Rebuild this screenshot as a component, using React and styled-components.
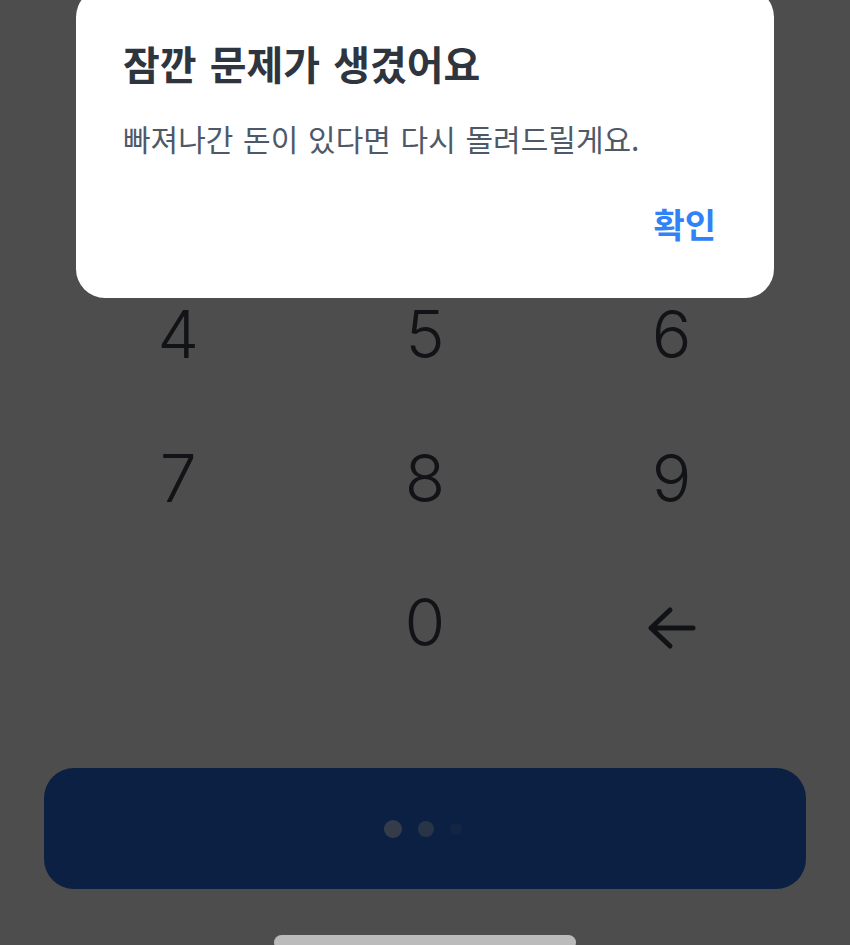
import React from "react";
import styled, { createGlobalStyle } from "styled-components";

const GlobalStyle = createGlobalStyle`
  html, body {
    margin: 0;
    padding: 0;
    background: #4d4d4e;
  }
  * { box-sizing: border-box; }
`;

const Screen = styled.div`
  position: relative;
  width: 850px;
  height: 945px;
  overflow: hidden;
  background: #ffffff;
  display: flex;
  flex-direction: column;
  align-items: center;
  & > * { flex-shrink: 0; }
`;

const Keypad = styled.div`
  width: 100%;
  padding: 118px 55px 0;
  display: grid;
  grid-template-columns: repeat(3, 1fr);
  grid-auto-rows: 144px;
`;

const Key = styled.button`
  border: 0;
  background: transparent;
  padding: 0;
  margin: 0;
  display: flex;
  align-items: center;
  justify-content: center;
  font-family: Inter, "Noto Sans", sans-serif;
  font-weight: 300;
  font-size: 66px;
  line-height: 144px;
  color: #3c4149;
  cursor: pointer;
`;

const BackIcon = styled.svg`
  width: 50px;
  height: 44px;
  margin-top: 12px;
  stroke: #3a3e45;
  stroke-width: 5;
  fill: none;
  stroke-linecap: round;
  stroke-linejoin: round;
`;

const SubmitButton = styled.button`
  margin-top: 74px;
  width: 762px;
  height: 121px;
  border: 0;
  border-radius: 30px;
  background: #2a6bdc;
  display: flex;
  align-items: center;
  justify-content: center;
  gap: 16px;
  padding: 0 5px 0 0;
`;

const Dot = styled.span`
  width: ${(p) => p.$size}px;
  height: ${(p) => p.$size}px;
  border-radius: 50%;
  background: rgba(255, 255, 255, ${(p) => p.$alpha});
`;

const HomeBar = styled.div`
  position: relative;
  z-index: 3;
  margin-top: 46px;
  width: 302px;
  height: 15px;
  border-radius: 8px;
  background: #bcbbbc;
`;

const Scrim = styled.div`
  position: absolute;
  inset: 0;
  z-index: 1;
  background: rgba(0, 0, 0, 0.698);
`;

const Dialog = styled.div`
  position: absolute;
  z-index: 2;
  top: -12px;
  left: 76px;
  width: 698px;
  background: #ffffff;
  border-radius: 29px;
  padding: 49px 48px 53px 47px;
  display: flex;
  flex-direction: column;
  font-family: "Noto Sans CJK KR", "Noto Sans", sans-serif;
`;

const Title = styled.h2`
  margin: 0;
  font-size: 40px;
  line-height: 52px;
  font-weight: 700;
  color: #2f353e;
  word-spacing: 4px;
`;

const Message = styled.p`
  margin: 29px 0 0;
  font-size: 30px;
  line-height: 40px;
  font-weight: 400;
  color: #4e5968;
  word-spacing: 3px;
`;

const Actions = styled.div`
  margin-top: 45px;
  display: flex;
  justify-content: flex-end;
`;

const ConfirmButton = styled.button`
  border: 0;
  background: transparent;
  padding: 0 10px 0 0;
  font-family: "Noto Sans CJK KR", "Noto Sans", sans-serif;
  font-size: 34px;
  line-height: 42px;
  font-weight: 700;
  color: #3182f6;
  cursor: pointer;
`;

const keys = ["1", "2", "3", "4", "5", "6", "7", "8", "9", "", "0", "back"];

export default function App() {
  return (
    <>
      <GlobalStyle />
      <Screen>
        <Keypad>
          {keys.map((k, i) => (
            <Key key={i} aria-label={k === "back" ? "지우기" : k}>
              {k === "back" ? (
                <BackIcon viewBox="0 0 50 44">
                  <path d="M46 22 H4 M23 4 L4 22 L23 40" />
                </BackIcon>
              ) : (
                k
              )}
            </Key>
          ))}
        </Keypad>
        <SubmitButton aria-label="처리 중">
          <Dot $size={18} $alpha={0.62} />
          <Dot $size={16} $alpha={0.45} />
          <Dot $size={12} $alpha={0.1} />
        </SubmitButton>
        <HomeBar />
        <Scrim />
        <Dialog role="alertdialog">
          <Title>잠깐 문제가 생겼어요</Title>
          <Message>빠져나간 돈이 있다면 다시 돌려드릴게요.</Message>
          <Actions>
            <ConfirmButton>확인</ConfirmButton>
          </Actions>
        </Dialog>
      </Screen>
    </>
  );
}
